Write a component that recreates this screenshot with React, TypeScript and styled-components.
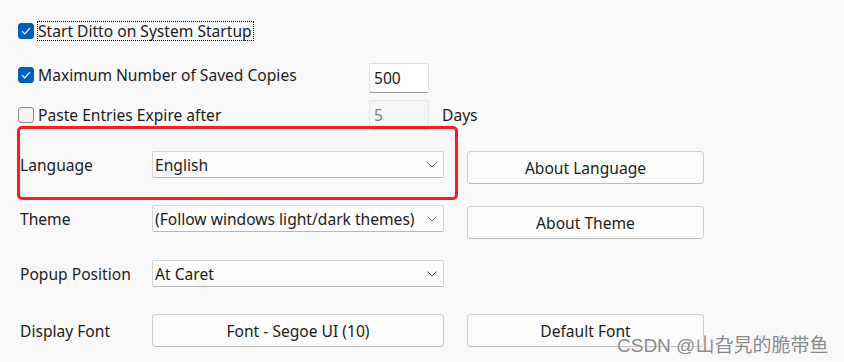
import { Fragment } from "react";
import styled, { createGlobalStyle } from "styled-components";

// Ditto options page, general tab

const Global = createGlobalStyle`
  html, body {
    margin: 0;
    padding: 0;
    background: #f9f9f9;
  }
  body {
    font-family: "Segoe UI", "Noto Sans", sans-serif;
    font-size: 15.6px;
    color: #1b1b1b;
  }
`;

const Page = styled.div`
  position: relative;
  width: 844px;
  height: 362px;
  overflow: hidden;
  box-sizing: border-box;
  padding-left: 18px;
  display: flex;
  flex-direction: column;
`;

const OptionRow = styled.div<{ $mt: number }>`
  display: flex;
  align-items: flex-start;
  margin-top: ${(p) => p.$mt}px;
  height: 30px;
`;

const CheckLine = styled.label<{ $top?: number }>`
  display: flex;
  align-items: center;
  gap: 4px;
  width: 351px;
  height: 20px;
  margin-top: ${(p) => p.$top ?? 0}px;
  white-space: nowrap;
`;

const Box = styled.span<{ $on?: boolean }>`
  width: 16px;
  height: 16px;
  box-sizing: border-box;
  border-radius: 3px;
  display: flex;
  align-items: center;
  justify-content: center;
  background: ${(p) => (p.$on ? "#005fb8" : "#f3f3f3")};
  border: 1px solid ${(p) => (p.$on ? "#005fb8" : "#8b8b8b")};
`;

const FocusText = styled.span<{ $focus?: boolean }>`
  line-height: 18px;
  padding: 0 1px 0 0;
  margin-left: -1px;
  border: 1px dotted ${(p) => (p.$focus ? "#000" : "transparent")};
`;

const NumInput = styled.div<{ $disabled?: boolean }>`
  width: 60px;
  height: 30px;
  box-sizing: border-box;
  padding: 0 4px;
  line-height: 28px;
  border: 1px solid ${(p) => (p.$disabled ? "#e6e6e6" : "#e2e2e2")};
  border-bottom-color: ${(p) => (p.$disabled ? "#e6e6e6" : "#9a9a9a")};
  border-radius: 2px;
  background: ${(p) => (p.$disabled ? "#f6f6f6" : "#ffffff")};
  color: ${(p) => (p.$disabled ? "#7a7a7a" : "#1b1b1b")};
`;

const Unit = styled.span`
  margin-left: 13px;
  margin-top: 6px;
  line-height: 18px;
`;

const Settings = styled.div`
  margin-top: 21px;
  display: grid;
  grid-template-columns: 109px 292px 237px;
  grid-template-rows: 54px 55px 54px 48px;
  column-gap: 23px;
  align-items: start;
  padding-left: 2px;
`;

const FieldLabel = styled.span<{ $h: number }>`
  line-height: ${(p) => p.$h}px;
  margin-top: 1px;
  white-space: nowrap;
`;

const Combo = styled.div`
  height: 27px;
  box-sizing: border-box;
  display: flex;
  align-items: center;
  justify-content: space-between;
  padding: 0 6px 0 2px;
  background: #fdfdfd;
  border: 1px solid #d6d6d6;
  border-bottom-color: #b8b8b8;
  border-radius: 2px;
  white-space: nowrap;
`;

const Button = styled.div<{ $nudge?: number }>`
  height: 33px;
  box-sizing: border-box;
  margin-top: ${(p) => p.$nudge ?? 0}px;
  display: flex;
  align-items: center;
  justify-content: center;
  background: #fdfdfd;
  border: 1px solid #d0d0d0;
  border-bottom-color: #bcbcbc;
  border-radius: 4px;
`;

const Annotation = styled.div`
  position: absolute;
  left: 17px;
  top: 126px;
  width: 441px;
  height: 74px;
  box-sizing: border-box;
  border: 3px solid #fe1b1b;
  border-radius: 5px;
  pointer-events: none;
`;

const Watermark = styled.div`
  position: absolute;
  left: 617px;
  top: 330px;
  font-family: "Liberation Sans", "Noto Sans CJK SC", sans-serif;
  font-size: 19px;
  color: #8a8a8a;
  white-space: nowrap;
  text-shadow: 0 0 2px #fff, 0 0 1px #fff;
  pointer-events: none;
`;

const Check = () => (
  <svg width="10" height="8" viewBox="0 0 10 8">
    <path d="M1 4.2 L3.8 7 L9 1.2" fill="none" stroke="#fff" strokeWidth="1.2" />
  </svg>
);

const Chevron = () => (
  <svg width="10" height="6" viewBox="0 0 10 6">
    <path d="M0.5 0.5 L5 5 L9.5 0.5" fill="none" stroke="#606060" strokeWidth="1" />
  </svg>
);

function Checkbox({ on, children, focus, top }: { on?: boolean; children: string; focus?: boolean; top?: number }) {
  return (
    <CheckLine $top={top}>
      <Box $on={on}>{on && <Check />}</Box>
      <FocusText $focus={focus}>{children}</FocusText>
    </CheckLine>
  );
}

const rows = [
  { label: "Language", value: "English", action: "About Language" },
  { label: "Theme", value: "(Follow windows light/dark themes)", action: "About Theme" },
  { label: "Popup Position", value: "At Caret" },
];

export default function App() {
  return (
    <>
      <Global />
      <Page>
        <OptionRow $mt={21}>
          <Checkbox on focus>
            Start Ditto on System Startup
          </Checkbox>
        </OptionRow>
        <OptionRow $mt={22}>
          <Checkbox on top={2}>
            Maximum Number of Saved Copies
          </Checkbox>
          <NumInput>500</NumInput>
        </OptionRow>
        <OptionRow $mt={7}>
          <Checkbox top={5}>Paste Entries Expire after</Checkbox>
          <NumInput $disabled>5</NumInput>
          <Unit>Days</Unit>
        </OptionRow>
        <Settings>
          {rows.map((r, i) => (
            <Fragment key={r.label}>
              <FieldLabel $h={27}>{r.label}</FieldLabel>
              <Combo>
                <span>{r.value}</span>
                <Chevron />
              </Combo>
              {r.action ? <Button $nudge={i}>{r.action}</Button> : <span />}
            </Fragment>
          ))}
          <FieldLabel $h={33}>Display Font</FieldLabel>
          <Button>Font - Segoe UI (10)</Button>
          <Button>Default Font</Button>
        </Settings>
        <Annotation />
        <Watermark>CSDN @山旮旯的脆带鱼</Watermark>
      </Page>
    </>
  );
}
